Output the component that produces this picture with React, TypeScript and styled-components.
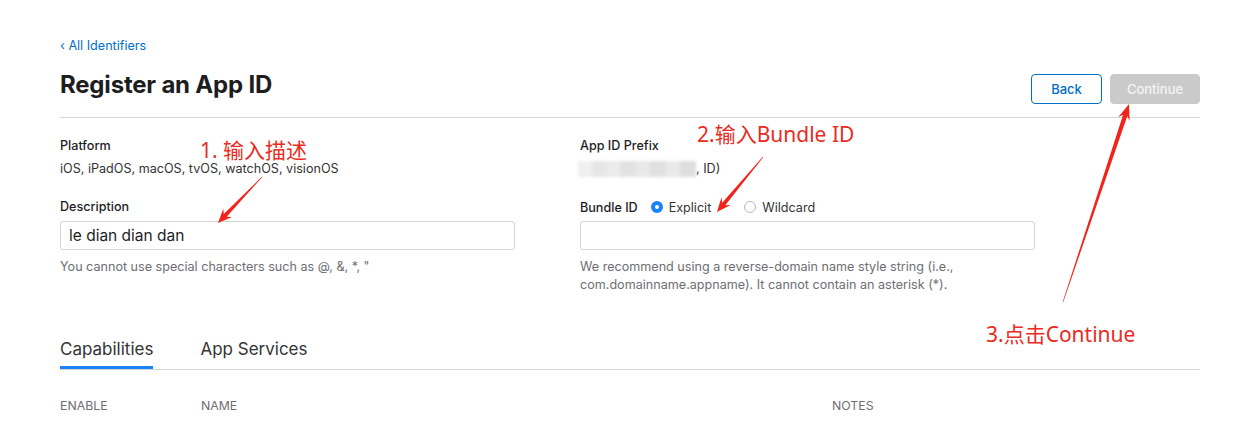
import React from "react";
import styled, { createGlobalStyle } from "styled-components";

const GlobalStyle = createGlobalStyle`
  html, body { margin: 0; padding: 0; background: #fff; }
  body { font-family: Inter, "Noto Sans", "Liberation Sans", sans-serif; color: #1d1d1f; -webkit-font-smoothing: antialiased; }
  * { box-sizing: border-box; }
`;

const Page = styled.div`
  position: relative;
  width: 1253px;
  height: 423px;
  overflow: hidden;
`;

const Content = styled.div`
  width: 1140px;
  margin-left: 60px;
  padding-top: 38px;
`;

const BackLink = styled.a`
  display: block;
  font-size: 12.6px;
  line-height: 16px;
  color: #0070c9;
  text-decoration: none;
`;

const HeaderRow = styled.div`
  display: flex;
  align-items: flex-start;
  justify-content: space-between;
  padding-top: 17px;
  padding-bottom: 13px;
  border-bottom: 1px solid #d6d6d6;
`;

const Title = styled.h1`
  margin: 0;
  font-size: 24px;
  line-height: 28px;
  font-weight: 700;
  letter-spacing: -0.2px;
`;

const Buttons = styled.div`
  display: flex;
  gap: 8px;
  margin-top: 3px;
`;

const Button = styled.button<{ $primary?: boolean }>`
  height: 30px;
  padding: 0;
  width: ${(p) => (p.$primary ? "90px" : "71px")};
  border-radius: 4px;
  font-family: inherit;
  font-size: 13px;
  font-weight: 500;
  border: 1px solid ${(p) => (p.$primary ? "#cacaca" : "#0070c9")};
  background: ${(p) => (p.$primary ? "#cacaca" : "#fff")};
  color: ${(p) => (p.$primary ? "#f4f4f4" : "#0070c9")};
`;

const FormGrid = styled.div`
  display: grid;
  grid-template-columns: 455px 455px;
  column-gap: 65px;
  padding-top: 20px;
`;

const Column = styled.div`
  display: flex;
  flex-direction: column;
`;

const Label = styled.div<{ $gap?: number }>`
  font-size: 12.6px;
  line-height: 16px;
  font-weight: 500;
  margin-top: ${(p) => p.$gap ?? 0}px;
`;

const Value = styled.div`
  font-size: 12.6px;
  line-height: 16px;
  margin-top: 7px;
  display: flex;
  align-items: center;
  color: #333;
`;

const Blur = styled.span`
  display: inline-flex;
  height: 16px;
  width: 118px;
  filter: blur(1.5px);
  margin-left: -2px;
`;

const BlurCell = styled.span<{ $c: string; $w: number }>`
  display: inline-block;
  height: 100%;
  width: ${(p) => p.$w}px;
  background: ${(p) => p.$c};
`;

const Input = styled.div`
  height: 29px;
  margin-top: 6px;
  border: 1px solid #d2d2d7;
  border-radius: 3px;
  padding: 0 8px;
  font-size: 15.5px;
  line-height: 27px;
  color: #1d1d1f;
`;

const Help = styled.div`
  margin-top: 8px;
  font-size: 12.6px;
  line-height: 18px;
  color: #6e6e73;
`;

const BundleRow = styled.div`
  display: flex;
  align-items: center;
  margin-top: 22px;
  height: 16px;
  font-size: 12.6px;
`;

const BundleLabel = styled.span`
  font-weight: 500;
  margin-right: 13px;
`;

const RadioOpt = styled.label`
  display: flex;
  align-items: center;
  gap: 6px;
  margin-right: 33px;
  color: #333;
`;

const Radio = styled.span<{ $on?: boolean }>`
  width: 12px;
  height: 12px;
  border-radius: 50%;
  background: ${(p) => (p.$on ? "#1a82fb" : "#fff")};
  border: ${(p) => (p.$on ? "none" : "1px solid #b8b8b8")};
  display: flex;
  align-items: center;
  justify-content: center;
  &::after {
    content: "";
    display: ${(p) => (p.$on ? "block" : "none")};
    width: 4px;
    height: 4px;
    border-radius: 50%;
    background: #fff;
  }
`;

const Tabs = styled.div`
  display: flex;
  gap: 47px;
  margin-top: 43px;
  border-bottom: 1px solid #d2d2d7;
`;

const Tab = styled.div<{ $active?: boolean }>`
  font-size: 17px;
  line-height: 24px;
  padding-bottom: 5px;
  border-bottom: 3px solid ${(p) => (p.$active ? "#1a82fb" : "transparent")};
  color: #333;
`;

const TableHead = styled.div`
  display: grid;
  grid-template-columns: 141px 631px 1fr;
  width: 1075px;
  padding-top: 28px;
  padding-bottom: 9px;
  border-bottom: 1px solid #e8e8ed;
  font-size: 12.3px;
  line-height: 16px;
  color: #6e6e73;
  text-transform: uppercase;
`;

const Note = styled.div<{ $x: number; $y: number }>`
  position: absolute;
  left: ${(p) => p.$x}px;
  top: ${(p) => p.$y}px;
  font-family: "Noto Sans", "Noto Sans CJK SC", sans-serif;
  font-size: 21px;
  line-height: 21px;
  color: #ea2b22;
  white-space: nowrap;
`;

const Overlay = styled.svg`
  position: absolute;
  left: 0;
  top: 0;
  pointer-events: none;
`;

type Pt = [number, number];

function arrowPoints(tail: Pt, tip: Pt, headLen = 14, headW = 6, shaftW = 2, tailW = 0.3): string {
  const dx = tip[0] - tail[0];
  const dy = tip[1] - tail[1];
  const len = Math.hypot(dx, dy);
  const ux = dx / len;
  const uy = dy / len;
  const nx = -uy;
  const ny = ux;
  const bx = tip[0] - ux * headLen;
  const by = tip[1] - uy * headLen;
  const nb = tip[0] - ux * (headLen * 0.75);
  const nby = tip[1] - uy * (headLen * 0.75);
  const pts: Pt[] = [
    [tail[0] + nx * tailW, tail[1] + ny * tailW],
    [nb + nx * shaftW, nby + ny * shaftW],
    [bx + nx * headW, by + ny * headW],
    tip,
    [bx - nx * headW, by - ny * headW],
    [nb - nx * shaftW, nby - ny * shaftW],
    [tail[0] - nx * tailW, tail[1] - ny * tailW],
  ];
  return pts.map((p) => `${p[0].toFixed(1)},${p[1].toFixed(1)}`).join(" ");
}

const blurCells: [string, number][] = [
  ["#f0f0f0", 14],
  ["#e6e6e6", 14],
  ["#ebebeb", 14],
  ["#e2e2e2", 16],
  ["#e8e8e8", 14],
  ["#e0e0e0", 16],
  ["#e9e9e9", 14],
  ["#dedede", 16],
];

export default function App() {
  return (
    <Page>
      <GlobalStyle />
      <Content>
        <BackLink href="#">‹ All Identifiers</BackLink>
        <HeaderRow>
          <Title>Register an App ID</Title>
          <Buttons>
            <Button>Back</Button>
            <Button $primary>Continue</Button>
          </Buttons>
        </HeaderRow>
        <FormGrid>
          <Column>
            <Label>Platform</Label>
            <Value>iOS, iPadOS, macOS, tvOS, watchOS, visionOS</Value>
            <Label $gap={22}>Description</Label>
            <Input>le dian dian dan</Input>
            <Help>You cannot use special characters such as @, &amp;, *, "</Help>
          </Column>
          <Column>
            <Label>App ID Prefix</Label>
            <Value>
              <Blur>
                {blurCells.map(([c, w], i) => (
                  <BlurCell key={i} $c={c} $w={w} />
                ))}
              </Blur>
              <span>, ID)</span>
            </Value>
            <BundleRow>
              <BundleLabel>Bundle ID</BundleLabel>
              <RadioOpt>
                <Radio $on />
                Explicit
              </RadioOpt>
              <RadioOpt>
                <Radio />
                Wildcard
              </RadioOpt>
            </BundleRow>
            <Input />
            <Help>
              We recommend using a reverse-domain name style string (i.e.,
              <br />
              com.domainname.appname). It cannot contain an asterisk (*).
            </Help>
          </Column>
        </FormGrid>
        <Tabs>
          <Tab $active>Capabilities</Tab>
          <Tab>App Services</Tab>
        </Tabs>
        <TableHead>
          <span>Enable</span>
          <span>Name</span>
          <span>Notes</span>
        </TableHead>
      </Content>

      <Note $x={200} $y={140}>1. 输入描述</Note>
      <Note $x={697} $y={124}>2.输入Bundle ID</Note>
      <Note $x={986} $y={324}>3.点击Continue</Note>

      <Overlay width={1253} height={423} viewBox="0 0 1253 423">
        <polygon points={arrowPoints([262, 177], [218, 223])} fill="#f2231b" />
        <polygon points={arrowPoints([763, 157], [717, 212])} fill="#f2231b" />
        <polygon points={arrowPoints([1063, 302], [1129, 104], 16, 6, 2.2, 0.3)} fill="#f2231b" />
      </Overlay>
    </Page>
  );
}
